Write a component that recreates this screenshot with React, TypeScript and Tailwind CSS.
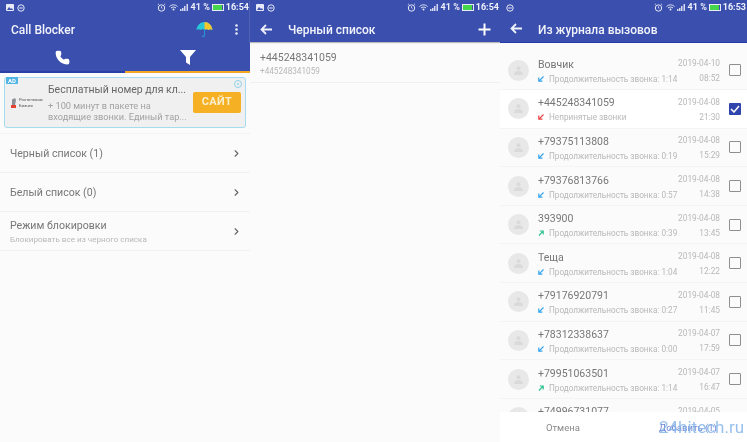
import { ChevronRight, Phone } from "lucide-react";

const calls = [
  { name: "Вовчик", info: "Продолжительность звонка: 1:14", date: "2019-04-10", time: "08:52", kind: "in" },
  { name: "+445248341059", info: "Непринятые звонки", date: "2019-04-08", time: "21:30", kind: "missed", checked: true },
  { name: "+79375113808", info: "Продолжительность звонка: 0:19", date: "2019-04-08", time: "15:29", kind: "in" },
  { name: "+79376813766", info: "Продолжительность звонка: 0:57", date: "2019-04-08", time: "14:38", kind: "in" },
  { name: "393900", info: "Продолжительность звонка: 0:39", date: "2019-04-08", time: "13:45", kind: "out" },
  { name: "Теща", info: "Продолжительность звонка: 1:04", date: "2019-04-08", time: "12:22", kind: "in" },
  { name: "+79176920791", info: "Продолжительность звонка: 0:27", date: "2019-04-08", time: "11:45", kind: "in" },
  { name: "+78312338637", info: "Продолжительность звонка: 0:00", date: "2019-04-07", time: "17:59", kind: "in" },
  { name: "+79951063501", info: "Продолжительность звонка: 1:14", date: "2019-04-07", time: "16:47", kind: "out" },
  { name: "+74996731077", info: "Продолжительность звонка: 0:10", date: "2019-04-05", time: "10:11", kind: "in" },
];

const StatusBar = ({ time, photo = true }: { time: string; photo?: boolean }) => (
  <div className="flex h-[15px] items-center justify-between pl-[6px] pr-px text-[9px] font-bold text-[#eef0fa]">
    <div className="flex items-center gap-[3px]">
      {photo && (
        <svg width="8" height="7" viewBox="0 0 8 7">
          <rect width="8" height="7" rx="1" fill="#e8ebf7" />
          <path d="M1 6l2-3 2 2 1-1 1 2z" fill="#3a4fae" />
        </svg>
      )}
      <svg width="8" height="8" viewBox="0 0 8 8">
        <circle cx="4" cy="4" r="3.2" fill="none" stroke="#e8ebf7" strokeWidth="1" />
        <rect x="2.2" y="3.5" width="3.6" height="1" fill="#e8ebf7" />
      </svg>
    </div>
    <div className="flex items-center">
      <svg width="9" height="9" viewBox="0 0 9 9" className="mr-[3px]">
        <circle cx="4.5" cy="5" r="3.2" fill="none" stroke="#e8ebf7" strokeWidth="1" />
        <path d="M4.5 3.3V5l1 .8M.8 1.8L2 .8M8.2 1.8L7 .8" fill="none" stroke="#e8ebf7" strokeWidth=".8" />
      </svg>
      <svg width="9" height="7" viewBox="0 0 9 7" className="mr-[2px]">
        <path d="M.5 2.5C3 .3 6 .3 8.5 2.5M2 4C3.5 2.8 5.5 2.8 7 4" fill="none" stroke="#e8ebf7" strokeWidth="1" />
        <circle cx="4.5" cy="5.5" r="1" fill="#e8ebf7" />
      </svg>
      <svg width="8" height="7" viewBox="0 0 8 7" className="mr-[3px]">
        <path d="M0 5h1.500v2H0zM2 4h1.500v3H2zM4 2h1.500v5H4zM6.500 0H8v7H6.500z" fill="#d5d9ee" />
      </svg>
      <span className="mr-[2px]">41 %</span>
      <span className="mr-[2px] flex h-[7px] w-[12px] items-center border border-[#e8ebf7]">
        <span className="h-full w-[9px] bg-[#45d64b]" />
      </span>
      <span>{time}</span>
    </div>
  </div>
);

const BackArrow = () => (
  <svg width="13" height="11" viewBox="0 0 13 11" className="mr-[15px]">
    <path d="M12 5.500H2M6 1L1.500 5.500 6 10" fill="none" stroke="#eef0fa" strokeWidth="1.800" />
  </svg>
);

const Arrow = ({ kind }: { kind: string }) => {
  const color = kind === "missed" ? "#ee4444" : kind === "out" ? "#2fc28f" : "#35a4ee";
  return (
    <svg width="6" height="6" viewBox="0 0 6 6" className="shrink-0">
      {kind === "out" ? (
        <path d="M1 5.500L5 1.200M1.800 1H5.200V4.400" fill="none" stroke={color} strokeWidth="1.200" />
      ) : (
        <path d="M5.500 .5L1.200 4.800M.8 1.600V5.200H4.400" fill="none" stroke={color} strokeWidth="1.200" />
      )}
    </svg>
  );
};

const Avatar = () => (
  <div className="flex h-[21px] w-[21px] shrink-0 items-center justify-center rounded-full bg-[#e8e8e8]">
    <svg width="11" height="11" viewBox="0 0 11 11">
      <circle cx="5.500" cy="3.200" r="2" fill="#dadada" />
      <path d="M1 10c0-3 2-4 4.500-4s4.500 1 4.500 4z" fill="#dadada" />
    </svg>
  </div>
);

const SettingRow = ({ title, sub }: { title: string; sub?: string }) => (
  <div className="flex h-[39px] items-center justify-between border-b border-[#f1f1f1] pl-[10px] pr-[8px]">
    <div className="pt-[2px]">
      <div className="text-[10.6px] leading-[14px] text-[#777]">{title}</div>
      {sub && <div className="mt-px text-[8.100px] leading-[11px] text-[#b8b8b8]">{sub}</div>}
    </div>
    <ChevronRight size={11} strokeWidth={2.500} className="text-[#666]" />
  </div>
);

export default function App() {
  return (
    <div className="relative flex h-[442px] w-[747px] overflow-hidden bg-[#fbfbfb] font-['Roboto',sans-serif] blur-[0.3px]">
      {/* main screen */}
      <section className="w-[250px] shrink-0">
        <header className="h-[73px] bg-[#3a4fae]">
          <StatusBar time="16:54" />
          <div className="flex h-[28px] items-center justify-between pl-[11px] pr-[12px]">
            <span className="pt-[2px] text-[12px] font-medium text-[#f2f3fb]">Call Blocker</span>
            <div className="flex items-center gap-[22px]">
              <svg width="17" height="17" viewBox="0 0 17 17">
                <path d="M.5 9C1 4 4.500 1 8.500 1S16 4 16.500 9c-1.300-1-2.800-1-4 0-1-1-2.900-1-4 0-1.100-1-3-1-4 0-1.200-1-2.700-1-4 0z" fill="#25c7d9" />
                <path d="M8.500 1c4 0 7.500 3 8 8-1.300-1-2.800-1-4 0-1-1-2.900-1-4 0z" fill="#f3c62e" />
                <path d="M8.500 8v6.500c0 1.500-2.200 1.500-2.200 0" fill="none" stroke="#2d93d6" strokeWidth="1.100" />
              </svg>
              <svg width="3" height="11" viewBox="0 0 3 11">
                <circle cx="1.500" cy="1.500" r="1.300" fill="#e9ebf7" />
                <circle cx="1.500" cy="5.500" r="1.300" fill="#e9ebf7" />
                <circle cx="1.500" cy="9.500" r="1.300" fill="#e9ebf7" />
              </svg>
            </div>
          </div>
          <div className="flex h-[30px]">
            <div className="flex flex-1 items-center justify-center border-b-2 border-[#2a3fa8]">
              <Phone size={15} fill="#fff" stroke="#fff" />
            </div>
            <div className="flex flex-1 items-center justify-center border-b-2 border-[#f5a623]">
              <svg width="16" height="15" viewBox="0 0 16 15">
                <path d="M0 0h16L10 7v8l-4-2.500V7z" fill="#fff" />
              </svg>
            </div>
          </div>
        </header>
        <div className="relative mx-[4px] mt-[4px] flex h-[51px] items-center rounded-[3px] border border-[#a5dbef] bg-[#f0f0f0]">
          <span className="absolute left-px top-[-1px] h-[7px] rounded-b-[1px] bg-[#4fb3e3] px-[2px] text-[6px] font-bold leading-[7px] text-white">
            AD
          </span>
          <svg width="10" height="10" viewBox="0 0 10 10" className="absolute right-[2px] top-px">
            <circle cx="5" cy="5" r="3.500" fill="none" stroke="#8fd3ec" strokeWidth="1" />
            <circle cx="5" cy="5" r="1" fill="#8fd3ec" />
          </svg>
          <div className="flex w-[43px] shrink-0 items-center pl-[6px]">
            <svg width="6" height="10" viewBox="0 0 6 10" className="mr-[2px] shrink-0">
              <path d="M1 1.500L4 0l1 2-1 5H1z" fill="#8b8f96" />
              <path d="M0 7h5v3H0z" fill="#e5432f" />
            </svg>
            <span className="whitespace-nowrap text-[4.200px] leading-[5.500px] text-[#555]">
              Ростелеком
              <br />
              Бизнес
            </span>
          </div>
          <div className="min-w-0 flex-1">
            <div className="whitespace-nowrap text-[10.500px] leading-[14px] text-[#666]">Бесплатный номер для кл...</div>
            <div className="mt-[3px] whitespace-nowrap text-[9.200px] leading-[11px] text-[#a2a2a2]">
              + 100 минут в пакете на
              <br />
              входящие звонки. Единый тар...
            </div>
          </div>
          <div className="mx-[4px] flex h-[21px] w-[48px] shrink-0 items-center justify-center rounded-[2px] bg-[#f5b023] text-[11px] font-bold tracking-[0.3px] text-[#fbeecb]">
            САЙТ
          </div>
        </div>
        <div className="mt-[5px] h-px bg-[#f3f3f3]" />
        <SettingRow title="Черный список (1)" />
        <SettingRow title="Белый список (0)" />
        <SettingRow title="Режим блокировки" sub="Блокировать все из черного списка" />
      </section>

      {/* blacklist */}
      <section className="w-[250px] shrink-0">
        <header className="h-[42px] bg-[#3a4fae] shadow-[0_1px_1px_#bbb]">
          <StatusBar time="16:54" />
          <div className="flex h-[28px] items-center pl-[10px] pr-[9px]">
            <BackArrow />
            <span className="flex-1 pt-[2px] text-[12px] font-medium text-[#f2f3fb]">Черный список</span>
            <svg width="13" height="13" viewBox="0 0 13 13">
              <path d="M6.500 .5v12M.5 6.500h12" stroke="#fff" strokeWidth="2" />
            </svg>
          </div>
        </header>
        <div className="flex h-[41px] flex-col justify-center border-b border-[#f0f0f0] pl-[10px] pt-[4px]">
          <div className="text-[10.500px] leading-[14px] text-[#777]">+445248341059</div>
          <div className="text-[8.200px] leading-[12px] text-[#b8b8b8]">+445248341059</div>
        </div>
      </section>

      {/* call log */}
      <section className="flex w-[247px] shrink-0 flex-col">
        <header className="h-[43px] shrink-0 border-b border-[#2438a8] bg-[#3a4fae]">
          <StatusBar time="16:53" photo={false} />
          <div className="flex h-[27px] items-center pl-[10px]">
            <BackArrow />
            <span className="pt-[2px] text-[12px] font-medium text-[#f2f3fb]">Из журнала вызовов</span>
          </div>
        </header>
        <div className="min-h-0 flex-1 overflow-hidden pt-[8.500px]">
          {calls.map((c) => (
            <div
              key={c.name}
              className={`flex h-[38.600px] items-center border-b border-[#f4f4f4] pl-[8px] pr-[6px] ${c.checked ? "bg-white" : ""}`}
            >
              <Avatar />
              <div className="ml-[9px] min-w-0 flex-1 pt-px">
                <div className="text-[10.500px] leading-[14px] text-[#777]">{c.name}</div>
                <div className="mt-[2px] flex items-center text-[8.200px] leading-[10px] text-[#b8b8b8]">
                  <Arrow kind={c.kind} />
                  <span className="ml-[5px]">{c.info}</span>
                </div>
              </div>
              <div className="mr-[9px] pt-px text-right text-[8.300px] leading-[10px] text-[#b8b8b8]">
                <div>{c.date}</div>
                <div className="mt-[5px]">{c.time}</div>
              </div>
              {c.checked ? (
                <span className="flex h-[12px] w-[12px] items-center justify-center rounded-[1px] bg-[#2f45ad]">
                  <svg width="10" height="8" viewBox="0 0 10 8">
                    <path d="M1 4l3 3 5-6" fill="none" stroke="#fff" strokeWidth="1.500" />
                  </svg>
                </span>
              ) : (
                <span className="h-[12px] w-[12px] rounded-[1px] border-[1.500px] border-[#8f8f8f]" />
              )}
            </div>
          ))}
        </div>
        <footer className="flex h-[30px] shrink-0 items-center bg-white pt-[3px] text-[9.500px] text-[#8a8a8a]">
          <span className="flex-1 pl-[46px]">Отмена</span>
          <span className="w-[88px] text-[#6f86d2]">Добавить (1)</span>
        </footer>
      </section>

      <span className="absolute left-[659px] top-[417px] text-[17px] leading-[20px] text-[#7fb2e8]/80">24hitech.ru</span>
    </div>
  );
}
